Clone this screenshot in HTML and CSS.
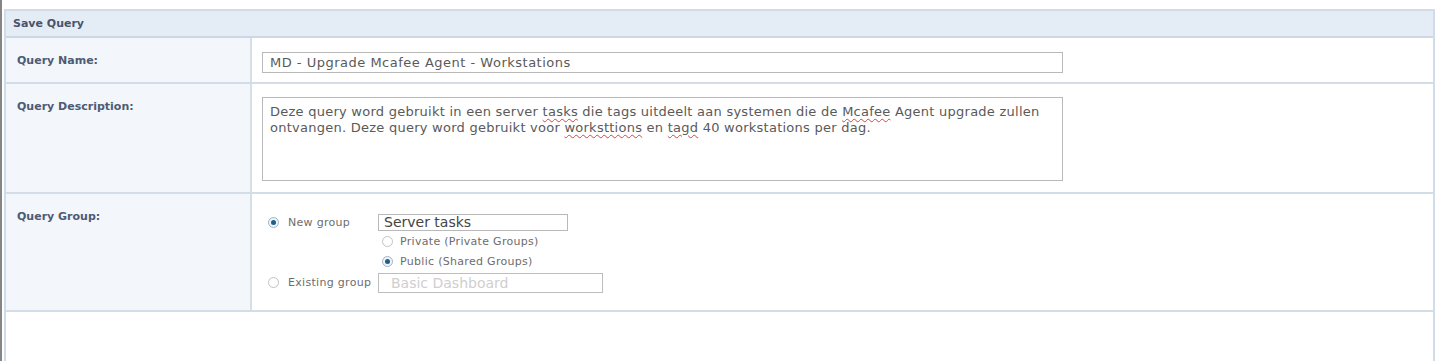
FILE: index.html
```html
<!DOCTYPE html>
<html lang="nl">
<head>
	<meta charset="UTF-8">
	<title>Save Query</title>
	<link rel="stylesheet" href="styles.css">
</head>
<body>
<div id="wrapper">
    <div class="form-box">
        <div class="form-title">Save Query</div>
        <div class="form-row row-name">
            <div class="form-label">Query Name:</div>
            <div class="form-value">
                <div class="field field-name">MD - Upgrade Mcafee Agent - Workstations</div>
            </div>
        </div>
        <div class="form-row row-desc">
            <div class="form-label">Query Description:</div>
            <div class="form-value">
                <div class="field field-desc">Deze query word gebruikt in een server <span class="typo">tasks</span> die tags uitdeelt aan systemen die de <span class="typo">Mcafee</span> Agent upgrade zullen ontvangen. Deze query word gebruikt voor <span class="typo">worksttions</span> en <span class="typo">tagd</span> 40 workstations per dag.</div>
            </div>
        </div>
        <div class="form-row row-group">
            <div class="form-label">Query Group:</div>
            <div class="form-value">
                <div class="group-grid">
                    <label class="opt opt-main"><i class="radio checked"></i><span>New group</span></label>
                    <div class="field field-group">Server tasks</div>

                    <div></div>
                    <label class="opt opt-sub"><i class="radio"></i><span>Private (Private Groups)</span></label>

                    <div></div>
                    <label class="opt opt-sub"><i class="radio checked"></i><span>Public (Shared Groups)</span></label>

                    <label class="opt opt-main"><i class="radio"></i><span>Existing group</span></label>
                    <div class="field field-exist">Basic Dashboard</div>
                </div>
            </div>
        </div>
    </div>
</div>
</body>
</html>
```

FILE: styles.css
```css
body,div,p,ul,li{
    margin: 0;
    padding: 0;
}
body{
    font-family: "DejaVu Sans", Verdana, sans-serif;
    font-size: 12px;
    background: #fff;
}
i{
    font-style: normal;
}
#wrapper{
    height: 361px;
    border-left: 2px solid #858585;
    padding: 9px 5px 0 2px;
    box-sizing: border-box;
    overflow: hidden;
}
.form-box{
    height: 100%;
    border: 2px solid #d2dce8;
    border-bottom: none;
    box-sizing: border-box;
}
.form-title{
    height: 27px;
    line-height: 25px;
    padding-left: 7px;
    background: #e4ecf5;
    border-bottom: 2px solid #cdd8e5;
    box-sizing: border-box;
    font-size: 11px;
    font-weight: bold;
    color: #4a5468;
}
.form-row{
    display: grid;
    grid-template-columns: 246px 1fr;
    border-bottom: 2px solid #d3dde8;
    box-sizing: border-box;
}
.form-label{
    padding: 16px 0 0 11px;
    font-size: 11px;
    font-weight: bold;
    color: #4d5b74;
    background: #f3f6fa;
    border-right: 2px solid #d6dee8;
}
.form-value{
    padding-left: 10px;
}
.row-name{
    height: 46px;
}
.row-name .form-value{
    padding-top: 14px;
}
.row-desc{
    height: 110px;
}
.row-desc .form-value{
    padding-top: 13px;
}
.row-group{
    height: 118px;
}
.row-group .form-value{
    padding-top: 20px;
}
.field{
    border: 1px solid #b9b9b9;
    background: #fff;
    color: #5a5a5a;
    box-sizing: border-box;
}
.field-name{
    width: 801px;
    height: 21px;
    line-height: 19px;
    padding-left: 7px;
    font-size: 13px;
    letter-spacing: 0.5px;
}
.field-desc{
    width: 801px;
    height: 84px;
    padding: 6px 5px 0 7px;
    line-height: 16px;
    font-size: 13px;
    letter-spacing: 0.25px;
}
.typo{
    text-decoration: underline wavy #d04848;
    text-decoration-thickness: 1px;
    text-underline-offset: 2px;
}
.group-grid{
    display: grid;
    grid-template-columns: 116px auto;
    align-items: center;
    justify-items: start;
}
.opt{
    display: flex;
    align-items: center;
    font-size: 11px;
    letter-spacing: 0.3px;
    color: #6d6d6d;
}
.opt-main{
    padding-left: 6px;
}
.opt-main .radio{
    margin-right: 9px;
}
.opt-sub{
    height: 20px;
    padding-left: 4px;
}
.opt-sub .radio{
    margin-right: 7px;
}
.radio{
    display: inline-block;
    width: 11px;
    height: 11px;
    border: 1px solid #c2c2c2;
    border-radius: 50%;
    box-sizing: border-box;
    background: #fff;
    position: relative;
}
.radio.checked{
    border-color: #9fb5c8;
    background: #eef4f9;
}
.radio.checked:after{
    content: "";
    position: absolute;
    left: 2px;
    top: 2px;
    width: 5px;
    height: 5px;
    border-radius: 50%;
    background: #1f5f86;
}
.field-group{
    width: 190px;
    height: 17px;
    line-height: 15px;
    padding-left: 5px;
    font-size: 14px;
    color: #444;
}
.field-exist{
    width: 225px;
    height: 20px;
    line-height: 18px;
    margin-top: 2px;
    padding-left: 12px;
    font-size: 14px;
    color: #cfcfcf;
    border-color: #bdbdbd;
}
```
